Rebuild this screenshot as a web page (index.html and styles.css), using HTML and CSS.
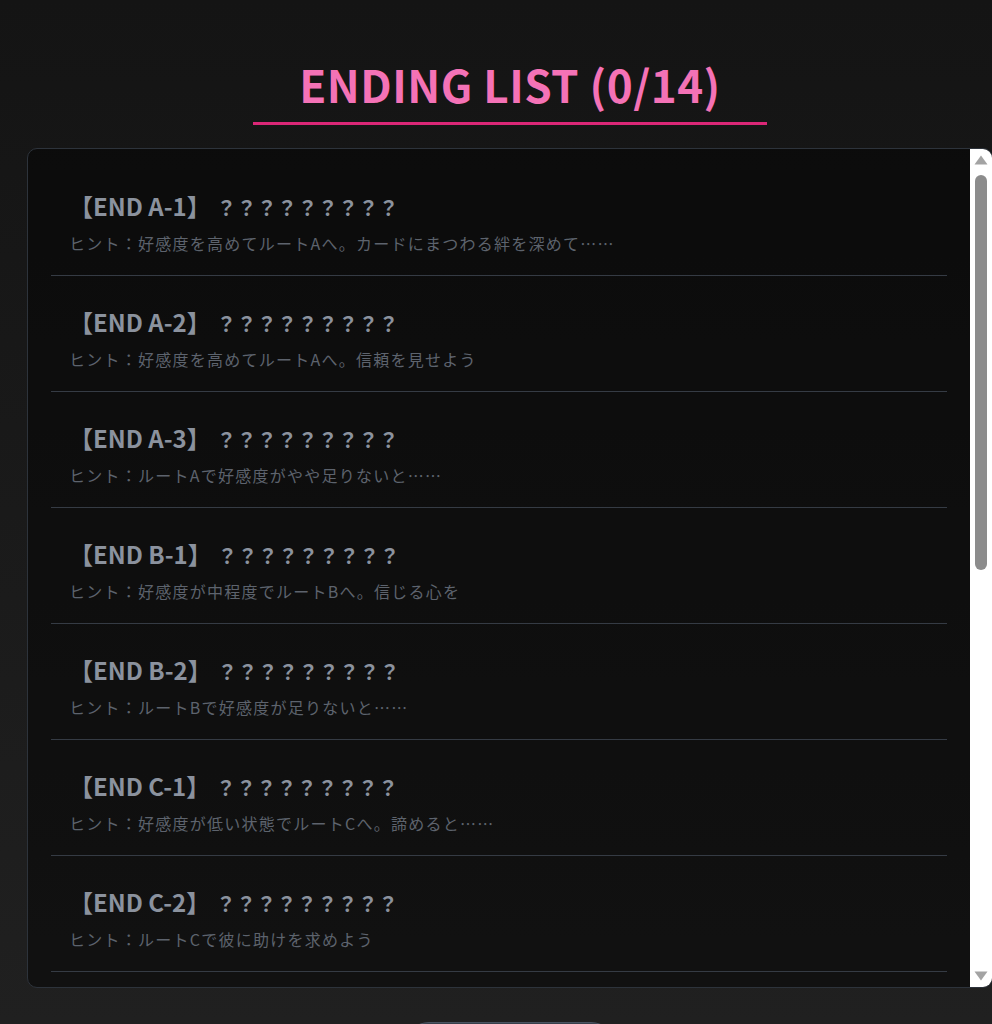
FILE: index.html
```html
<!DOCTYPE html>
<html lang="ja">
<head>
<meta charset="utf-8">
<title>Ending List</title>
<link rel="stylesheet" href="styles.css">
</head>
<body>
<div class="page">
  <header class="head">
    <h1 class="title">ENDING LIST (0/14)</h1>
  </header>
  <div class="panel">
    <div class="list-wrap">
      <ul class="list">
        <li class="item"><div class="item-title">【END A-1】 <span class="mask">？？？？？？？？？</span></div><div class="hint">ヒント：好感度を高めてルートAへ。カードにまつわる絆を深めて……</div></li>
        <li class="item"><div class="item-title">【END A-2】 <span class="mask">？？？？？？？？？</span></div><div class="hint">ヒント：好感度を高めてルートAへ。信頼を見せよう</div></li>
        <li class="item"><div class="item-title">【END A-3】 <span class="mask">？？？？？？？？？</span></div><div class="hint">ヒント：ルートAで好感度がやや足りないと……</div></li>
        <li class="item"><div class="item-title">【END B-1】 <span class="mask">？？？？？？？？？</span></div><div class="hint">ヒント：好感度が中程度でルートBへ。信じる心を</div></li>
        <li class="item"><div class="item-title">【END B-2】 <span class="mask">？？？？？？？？？</span></div><div class="hint">ヒント：ルートBで好感度が足りないと……</div></li>
        <li class="item"><div class="item-title">【END C-1】 <span class="mask">？？？？？？？？？</span></div><div class="hint">ヒント：好感度が低い状態でルートCへ。諦めると……</div></li>
        <li class="item"><div class="item-title">【END C-2】 <span class="mask">？？？？？？？？？</span></div><div class="hint">ヒント：ルートCで彼に助けを求めよう</div></li>
        <li class="item"><div class="item-title">【END C-3】 <span class="mask">？？？？？？？？？</span></div><div class="hint">ヒント：ルートCで最後まで一人で戦うと……</div></li>
        <li class="item"><div class="item-title">【END D-1】 <span class="mask">？？？？？？？？？</span></div><div class="hint">ヒント：すべての選択肢で嘘をつくと……</div></li>
        <li class="item"><div class="item-title">【END D-2】 <span class="mask">？？？？？？？？？</span></div><div class="hint">ヒント：カードを手放してみよう</div></li>
      </ul>
    </div>
    <div class="scrollbar" aria-hidden="true">
      <div class="sb-btn">
        <svg width="14" height="10" viewBox="0 0 14 10"><path d="M7 0.5 L13.5 9.5 L0.5 9.5 Z" fill="#a3a3a3"/></svg>
      </div>
      <div class="sb-track"><div class="sb-thumb"></div></div>
      <div class="sb-btn">
        <svg width="14" height="10" viewBox="0 0 14 10"><path d="M0.5 0.5 L13.5 0.5 L7 9.5 Z" fill="#a3a3a3"/></svg>
      </div>
    </div>
  </div>
  <div class="actions">
    <button class="back-btn" type="button">タイトルへ戻る</button>
  </div>
</div>
</body>
</html>
```

FILE: styles.css
```css
html, body {
  margin: 0;
  padding: 0;
  height: 100%;
  overflow: hidden;
}

body {
  background: linear-gradient(180deg, #141414 0%, #1a1a1a 50%, #202020 100%);
  font-family: "Noto Sans CJK JP", "Noto Sans", sans-serif;
  color: #9ca3af;
}

.page {
  width: 1020px;
  box-sizing: border-box;
  padding: 0 27px;
}

.head {
  display: flex;
  justify-content: center;
  padding-top: 56px;
  margin-bottom: 23px;
}

.title {
  margin: 0;
  padding: 0 46px 10px;
  font-size: 44px;
  line-height: 56px;
  font-weight: 700;
  color: #f472b6;
  border-bottom: 3px solid #db2777;
  letter-spacing: 0.5px;
}

.panel {
  display: flex;
  height: 840px;
  box-sizing: border-box;
  border: 1px solid #2d333b;
  border-radius: 10px;
  background: rgba(0, 0, 0, 0.45);
  overflow: hidden;
}

.list-wrap {
  flex: 1;
  min-width: 0;
  overflow: hidden;
  padding: 0 23px;
}

.list {
  list-style: none;
  margin: 0;
  padding: 11px 0 0;
}

.item {
  padding: 32px 18px 20px;
  border-bottom: 1px solid #353b44;
}

.item-title {
  font-size: 24px;
  line-height: 28px;
  height: 28px;
  font-weight: 700;
  color: #8b929e;
  letter-spacing: 0;
  white-space: nowrap;
}

.mask {
  font-size: 20px;
  letter-spacing: 0.3px;
}

.hint {
  margin-top: 11px;
  font-size: 16px;
  line-height: 24px;
  color: #5d636d;
  letter-spacing: 1.25px;
  white-space: nowrap;
}

.scrollbar {
  flex: none;
  width: 22px;
  background: #ffffff;
  display: flex;
  flex-direction: column;
}

.sb-btn {
  height: 22px;
  flex: none;
  display: flex;
  align-items: center;
  justify-content: center;
}

.sb-track {
  flex: 1;
  padding: 4px 5px;
}

.sb-thumb {
  height: 395px;
  background: #8c8c8c;
  border-radius: 6px;
}

.actions {
  display: flex;
  justify-content: center;
  padding-top: 34px;
}

.back-btn {
  width: 210px;
  height: 48px;
  border: 0;
  border-top: 1px solid #4a5361;
  border-radius: 24px;
  background: #37404b;
  color: #e5e7eb;
  font-family: inherit;
  font-size: 16px;
}
```
